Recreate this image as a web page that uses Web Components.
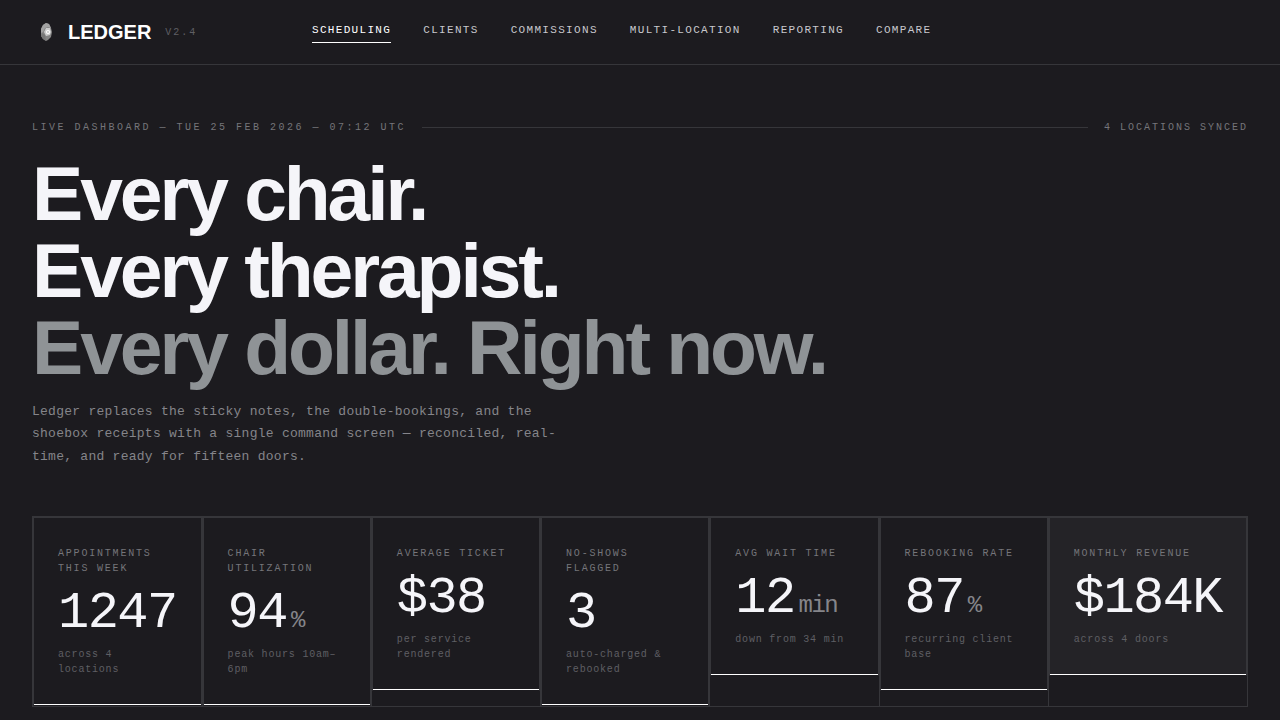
<!DOCTYPE html>
<html lang="en">
<head>
<meta charset="utf-8">
<meta name="viewport" content="width=device-width, initial-scale=1">
<title>Ledger</title>
<style>
  :root {
    --bg: #1c1b1f;
    --raised: #242327;
    --line: #36363a;
    --bright: #f5f5f9;
    --nav: #c8c8cd;
    --accent: #8f9396;
    --text: #85858a;
    --muted: #75757a;
    --faint: #5f5f64;
    --sans: "Liberation Sans", Arial, sans-serif;
    --mono: "Liberation Mono", "Courier New", monospace;
  }
  body { margin: 0; background: var(--bg); color: var(--bright); font-family: var(--mono); }
</style>
</head>
<body>
<ledger-header version="V2.4">
  <nav-link href="#scheduling" current>Scheduling</nav-link>
  <nav-link href="#clients">Clients</nav-link>
  <nav-link href="#commissions">Commissions</nav-link>
  <nav-link href="#multi-location">Multi-location</nav-link>
  <nav-link href="#reporting">Reporting</nav-link>
  <nav-link href="#compare">Compare</nav-link>
</ledger-header>
<ledger-hero>
  <status-line slot="status">
    <span>Live dashboard — Tue 25 Feb 2026 — 07:12 UTC</span>
    <span slot="end">4 locations synced</span>
  </status-line>
  <span slot="lead">Every chair.<br>Every therapist.</span>
  <span slot="accent">Every dollar. Right now.</span>
  <span slot="intro">Ledger replaces the sticky notes, the double-bookings, and the shoebox receipts with a single command screen — reconciled, real-time, and ready for fifteen doors.</span>
  <metric-grid>
    <metric-card label="Appointments this week" note="across 4 locations">1247</metric-card>
    <metric-card label="Chair utilization" note="peak hours 10am–6pm" unit="%">94</metric-card>
    <metric-card label="Average ticket" note="per service rendered">$38</metric-card>
    <metric-card label="No-shows flagged" note="auto-charged &amp; rebooked">3</metric-card>
    <metric-card label="Avg wait time" note="down from 34 min" unit="min">12</metric-card>
    <metric-card label="Rebooking rate" note="recurring client base" unit="%">87</metric-card>
    <metric-card label="Monthly revenue" note="across 4 doors" featured>$184K</metric-card>
  </metric-grid>
</ledger-hero>

<script>
const define = (name, html, setup) => {
  const template = document.createElement("template");
  template.innerHTML = html;
  customElements.define(name, class extends HTMLElement {
    constructor() {
      super();
      this.attachShadow({ mode: "open" }).append(template.content.cloneNode(true));
    }
    connectedCallback() {
      if (setup) setup(this, this.shadowRoot);
    }
  });
};

define("ledger-mark", `
  <style>
    :host { display: block; width: 28px; height: 28px; }
    svg { display: block; width: 100%; height: 100%; }
  </style>
  <svg viewBox="0 0 28 28" aria-hidden="true">
    <path d="M14 5l3 1 2 4 1 4-1 5-3 3-2 1-3-2-2-3V11l2-4z" fill="#858585"/>
    <path d="M14 5l3 1 2 4-3-1-3 1-2 4-2 1V11l2-4z" fill="#a2a2a2"/>
    <path d="M10 15l3 2 1 6-3-2-2-3z" fill="#777"/>
    <path d="M14 10l4 0 1 4-1 3-4 1-2-4z" fill="#cdcdcd"/>
    <circle cx="16" cy="14" r="2" fill="#fff"/>
    <path d="M15 14h2" stroke="#aaa" stroke-width="1"/>
  </svg>`);

define("nav-link", `
  <style>
    :host { display: block; }
    a { display: block; padding: 0 0 3px; border-bottom: 1px solid transparent; color: var(--nav);
        font: 11px/18px var(--mono); letter-spacing: .12em; text-transform: uppercase;
        text-decoration: none; white-space: nowrap; }
    :host([current]) a { color: #fff; border-color: #fff; }
  </style>
  <a><slot></slot></a>`,
  (host, root) => {
    const a = root.querySelector("a");
    a.href = host.getAttribute("href");
    if (host.hasAttribute("current")) a.setAttribute("aria-current", "page");
  });

define("ledger-header", `
  <style>
    :host { display: block; border-bottom: 1px solid var(--line); }
    header { display: flex; align-items: center; min-height: 64px; padding: 0 32px; }
    .brand { display: flex; align-items: center; flex: 0 0 280px; }
    .name { margin-left: 8px; color: #fff; font: bold 20px/24px var(--sans); text-decoration: none; }
    .version { margin-left: 14px; color: var(--faint); font-size: 10px; line-height: 11px; letter-spacing: .2em; }
    nav { display: flex; flex-wrap: wrap; gap: 8px 32px; }
    @media (max-width: 960px) {
      header { flex-wrap: wrap; gap: 16px; padding: 16px 32px; }
      .brand { flex-basis: 100%; }
    }
  </style>
  <header>
    <div class="brand">
      <ledger-mark></ledger-mark>
      <a class="name" href="#">LEDGER</a>
      <span class="version"></span>
    </div>
    <nav aria-label="Main"><slot></slot></nav>
  </header>`,
  (host, root) => { root.querySelector(".version").textContent = host.getAttribute("version"); });

define("status-line", `
  <style>
    :host { display: flex; align-items: center; gap: 16px; color: var(--muted);
            font-size: 10px; line-height: 11px; text-transform: uppercase; }
    .start { letter-spacing: .25em; }
    .end { letter-spacing: .2em; }
    .rule { flex: 1; height: 1px; background: var(--line); }
  </style>
  <div class="start"><slot></slot></div>
  <div class="rule"></div>
  <div class="end"><slot name="end"></slot></div>`);

define("ledger-hero", `
  <style>
    :host { display: block; padding: 57px 32px; }
    h1 { margin: 22px 0 0; font: bold clamp(40px, 6vw, 96px)/1 var(--sans); letter-spacing: -.04em; }
    .accent { display: block; color: var(--accent); }
    p { max-width: 540px; margin: 16px 0 48px; color: var(--text);
        font-size: 13px; line-height: 1.7; letter-spacing: .02em; }
  </style>
  <section>
    <slot name="status"></slot>
    <h1><slot name="lead"></slot><span class="accent"><slot name="accent"></slot></span></h1>
    <p><slot name="intro"></slot></p>
    <slot></slot>
  </section>`);

define("metric-grid", `
  <style>
    :host { display: grid; grid-template-columns: repeat(7, 1fr); border: 1px solid var(--line); }
    @media (max-width: 1200px) {
      :host { grid-template-columns: repeat(auto-fill, minmax(200px, 1fr)); }
    }
  </style>
  <slot></slot>`);

define("metric-card", `
  <style>
    :host { display: block; border-right: 1px solid var(--line); }
    :host(:last-of-type) { border-right: 0; }
    .card { position: relative; border: 1px solid var(--line); border-bottom-color: transparent; padding: 28px 24px;
            background: var(--bg); background-clip: padding-box; }
    .card::after { content: ""; position: absolute; inset: auto 0 0; height: 1px; background: #fff; }
    :host([featured]) .card { background-color: var(--raised); }
    .label { color: var(--muted); font-size: 10px; line-height: 15px; letter-spacing: .18em; text-transform: uppercase; }
    .value { margin: 12px 0 7px; font-size: 52px; line-height: 1; letter-spacing: -.03em; white-space: nowrap; }
    .unit { margin-left: 4px; color: var(--text); font-size: 24px; }
    .unit:empty { display: none; }
    .note { color: var(--faint); font-size: 10px; line-height: 15px; letter-spacing: .08em; }
  </style>
  <div class="card">
    <div class="label"></div>
    <div class="value"><slot></slot><span class="unit"></span></div>
    <div class="note"></div>
  </div>`,
  (host, root) => {
    for (const part of ["label", "unit", "note"])
      root.querySelector("." + part).textContent = host.getAttribute(part) || "";
  });
</script>
</body>
</html>
